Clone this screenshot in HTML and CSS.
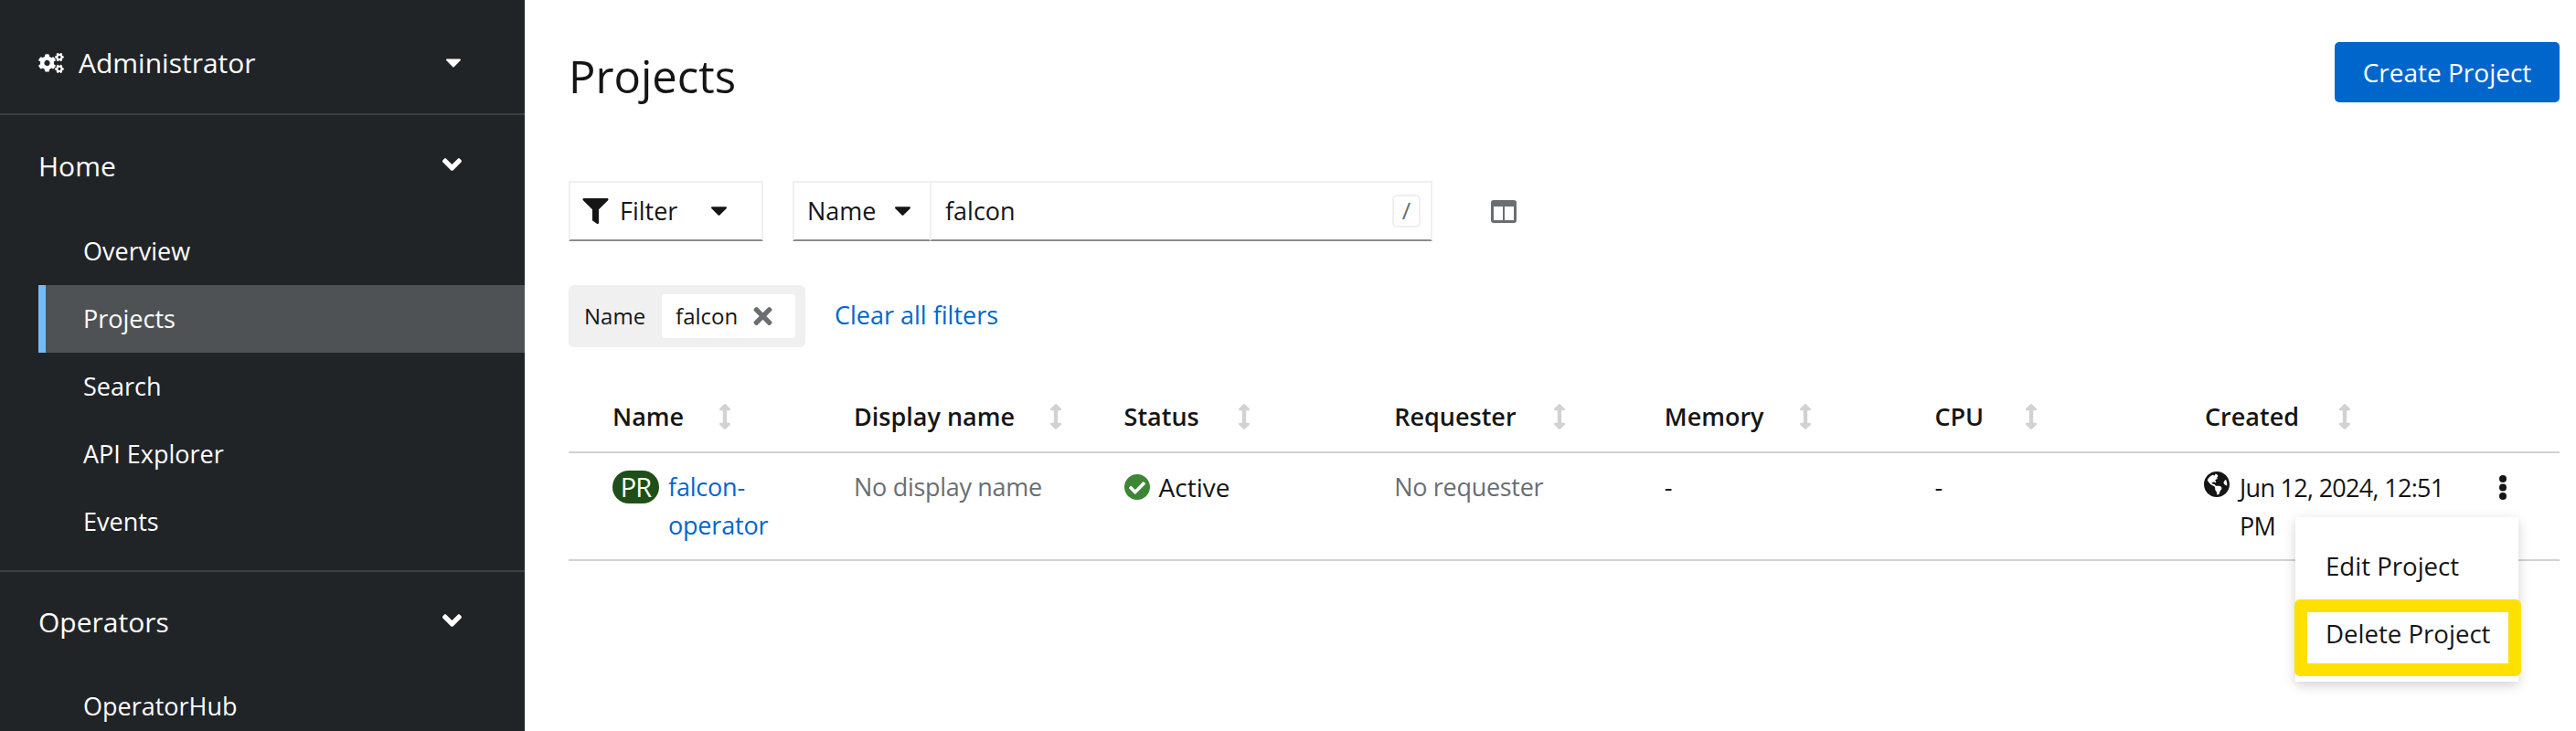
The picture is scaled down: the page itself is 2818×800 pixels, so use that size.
FILE: index.html
```html
<!DOCTYPE html>
<html lang="en">
<head>
    <meta charset="UTF-8">
    <title>Projects</title>
    <link rel="stylesheet" href="styles.css">
</head>
<body>
    <aside class="sidebar">
        <div class="perspective">
            <span class="perspective-name">
                <svg class="icon-cogs" viewBox="0 0 640 512"><path d="M512.1 191l-8.2 14.3c-3 5.3-9.4 7.5-15.1 5.4-11.8-4.4-22.6-10.7-32.1-18.6-4.6-3.8-5.8-10.5-2.8-15.7l8.2-14.3c-6.9-8-12.3-17.3-15.9-27.4h-16.5c-6 0-11.2-4.3-12.2-10.3-2-12-2.1-24.6 0-37.1 1-6 6.2-10.4 12.2-10.4h16.5c3.6-10.1 9-19.4 15.9-27.4l-8.2-14.3c-3-5.2-1.9-11.9 2.8-15.7 9.5-7.9 20.4-14.2 32.1-18.6 5.7-2.1 12.1.1 15.1 5.4l8.2 14.3c10.5-1.9 21.2-1.9 31.7 0L552 6.3c3-5.3 9.4-7.5 15.1-5.4 11.8 4.4 22.6 10.7 32.1 18.6 4.6 3.8 5.8 10.5 2.8 15.7l-8.2 14.3c6.9 8 12.3 17.3 15.9 27.4h16.5c6 0 11.2 4.3 12.2 10.3 2 12 2.1 24.6 0 37.1-1 6-6.2 10.4-12.2 10.4h-16.5c-3.6 10.1-9 19.4-15.9 27.4l8.2 14.3c3 5.2 1.9 11.9-2.8 15.7-9.5 7.9-20.4 14.2-32.1 18.6-5.7 2.1-12.1-.1-15.1-5.4l-8.2-14.3c-10.4 1.9-21.2 1.9-31.7 0zm-10.5-58.8c38.5 29.6 82.4-14.3 52.8-52.8-38.5-29.7-82.4 14.3-52.8 52.8zM386.3 286.1l33.7 16.8c10.1 5.8 14.5 18.1 10.5 29.1-8.9 24.2-26.4 46.4-42.6 65.8-7.4 8.9-20.2 11.1-30.3 5.3l-29.1-16.8c-16 13.7-34.6 24.6-54.9 31.7v33.6c0 11.6-8.3 21.6-19.7 23.6-24.6 4.2-50.4 4.4-75.9 0-11.5-2-20-11.9-20-23.6V418c-20.3-7.2-38.9-18-54.9-31.7L74 403c-10 5.8-22.9 3.6-30.3-5.3-16.2-19.4-33.3-41.6-42.2-65.7-4-10.9.4-23.2 10.5-29.1l33.3-16.8c-3.9-20.9-3.9-42.4 0-63.4L12 205.8c-10.1-5.8-14.6-18.1-10.5-29 8.9-24.2 26-46.4 42.2-65.8 7.4-8.9 20.2-11.1 30.3-5.3l29.1 16.8c16-13.7 34.6-24.6 54.9-31.7V57.1c0-11.5 8.2-21.5 19.6-23.5 24.6-4.2 50.5-4.4 76-.1 11.5 2 20 11.9 20 23.6v33.6c20.3 7.2 38.9 18 54.9 31.7l29.1-16.8c10-5.8 22.9-3.6 30.3 5.3 16.2 19.4 33.2 41.6 42.1 65.8 4 10.9.1 23.2-10 29.1l-33.7 16.8c3.9 21 3.9 42.5 0 63.5zm-117.6 21.1c59.2-77-28.7-164.9-105.7-105.7-59.2 77 28.7 164.9 105.7 105.7zm243.4 182.7l-8.2 14.3c-3 5.3-9.4 7.5-15.1 5.4-11.8-4.4-22.6-10.7-32.1-18.6-4.6-3.8-5.8-10.5-2.8-15.7l8.2-14.3c-6.9-8-12.3-17.3-15.9-27.4h-16.5c-6 0-11.2-4.3-12.2-10.3-2-12-2.1-24.6 0-37.1 1-6 6.2-10.4 12.2-10.4h16.5c3.6-10.1 9-19.4 15.9-27.4l-8.2-14.3c-3-5.2-1.9-11.9 2.8-15.7 9.5-7.9 20.4-14.2 32.1-18.6 5.7-2.1 12.1.1 15.1 5.4l8.2 14.3c10.5-1.9 21.2-1.9 31.7 0l8.2-14.3c3-5.3 9.4-7.5 15.1-5.4 11.8 4.4 22.6 10.7 32.1 18.6 4.6 3.8 5.8 10.5 2.8 15.7l-8.2 14.3c6.9 8 12.3 17.3 15.9 27.4h16.5c6 0 11.2 4.3 12.2 10.3 2 12 2.1 24.6 0 37.1-1 6-6.2 10.4-12.2 10.4h-16.5c-3.6 10.1-9 19.4-15.9 27.4l8.2 14.3c3 5.2 1.9 11.9-2.8 15.7-9.5 7.9-20.4 14.2-32.1 18.6-5.7 2.1-12.1-.1-15.1-5.4l-8.2-14.3c-10.4 1.9-21.2 1.9-31.7 0zM501.6 431c38.5 29.6 82.4-14.3 52.8-52.8-38.5-29.6-82.4 14.3-52.8 52.8z"/></svg>
                Administrator
            </span>
            <svg class="icon-caret" viewBox="10 188 300 175"><path d="M31.3 192h257.3c17.8 0 26.7 21.5 14.1 34.1L174.1 354.8c-7.8 7.8-20.5 7.8-28.3 0L17.2 226.1C4.6 213.5 13.5 192 31.3 192z"/></svg>
        </div>

        <div class="nav-section">
            <div class="nav-title">
                Home
                <svg class="icon-angle" viewBox="0 150 320 210"><path d="M143 352.3L7 216.3c-9.4-9.4-9.4-24.6 0-33.9l22.6-22.6c9.4-9.4 24.6-9.4 33.9 0l96.4 96.4 96.4-96.4c9.4-9.4 24.6-9.4 33.9 0l22.6 22.6c9.4 9.4 9.4 24.6 0 33.9l-136 136c-9.2 9.4-24.4 9.4-33.8 0z"/></svg>
            </div>
            <a class="nav-item" href="#">Overview</a>
            <a class="nav-item active" href="#">Projects</a>
            <a class="nav-item" href="#">Search</a>
            <a class="nav-item" href="#">API Explorer</a>
            <a class="nav-item" href="#">Events</a>
        </div>

        <div class="nav-section">
            <div class="nav-title">
                Operators
                <svg class="icon-angle" viewBox="0 150 320 210"><path d="M143 352.3L7 216.3c-9.4-9.4-9.4-24.6 0-33.9l22.6-22.6c9.4-9.4 24.6-9.4 33.9 0l96.4 96.4 96.4-96.4c9.4-9.4 24.6-9.4 33.9 0l22.6 22.6c9.4 9.4 9.4 24.6 0 33.9l-136 136c-9.2 9.4-24.4 9.4-33.8 0z"/></svg>
            </div>
            <a class="nav-item" href="#">OperatorHub</a>
        </div>
    </aside>

    <main class="main">
        <div class="page-header">
            <h1>Projects</h1>
            <button class="btn-primary" type="button">Create Project</button>
        </div>

        <div class="toolbar">
            <div class="select filter-select">
                <svg class="icon-filter" viewBox="0 0 512 512"><path d="M487.976 0H24.028C2.71 0-8.047 25.866 7.058 40.971L192 225.941V432c0 7.831 3.821 15.17 10.237 19.662l80 55.98C298.02 518.69 320 507.493 320 487.98V225.941l184.947-184.97C520.021 25.896 509.338 0 487.976 0z"/></svg>
                <span>Filter</span>
                <svg class="icon-caret dark" viewBox="10 188 300 175"><path d="M31.3 192h257.3c17.8 0 26.7 21.5 14.1 34.1L174.1 354.8c-7.8 7.8-20.5 7.8-28.3 0L17.2 226.1C4.6 213.5 13.5 192 31.3 192z"/></svg>
            </div>
            <div class="search-group">
                <div class="select name-select">
                    <span>Name</span>
                    <svg class="icon-caret dark" viewBox="10 188 300 175"><path d="M31.3 192h257.3c17.8 0 26.7 21.5 14.1 34.1L174.1 354.8c-7.8 7.8-20.5 7.8-28.3 0L17.2 226.1C4.6 213.5 13.5 192 31.3 192z"/></svg>
                </div>
                <div class="search-input">
                    <span>falcon</span>
                    <kbd class="shortcut">/</kbd>
                </div>
            </div>
            <svg class="icon-columns" viewBox="0 0 28 25">
                <rect width="28" height="25" rx="3" fill="#6a6e73"/>
                <rect x="3" y="7" width="10" height="15" fill="#fff"/>
                <rect x="15" y="7" width="10" height="15" fill="#fff"/>
            </svg>
        </div>

        <div class="chips-row">
            <div class="chip-group">
                <span class="chip-label">Name</span>
                <span class="chip">
                    falcon
                    <svg class="icon-times" viewBox="0 80 352 352"><path d="M242.72 256l100.07-100.07c12.28-12.28 12.28-32.19 0-44.48l-22.24-22.24c-12.28-12.28-32.19-12.28-44.48 0L176 189.28 75.93 89.21c-12.28-12.28-32.19-12.28-44.48 0L9.21 111.45c-12.28 12.28-12.28 32.19 0 44.48L109.28 256 9.21 356.07c-12.28 12.28-12.28 32.19 0 44.48l22.24 22.24c12.28 12.28 32.2 12.28 44.48 0L176 322.72l100.07 100.07c12.28 12.28 32.2 12.28 44.48 0l22.24-22.24c12.28-12.28 12.28-32.19 0-44.48L242.72 256z"/></svg>
                </span>
            </div>
            <a class="link" href="#">Clear all filters</a>
        </div>

        <div class="table">
            <div class="table-head">
                <div class="th name-th">Name <svg class="icon-sort" viewBox="0 0 256 512"><use href="#sort"/></svg></div>
                <div class="th display-th">Display name <svg class="icon-sort" viewBox="0 0 256 512"><use href="#sort"/></svg></div>
                <div class="th status-th">Status <svg class="icon-sort" viewBox="0 0 256 512"><use href="#sort"/></svg></div>
                <div class="th requester-th">Requester <svg class="icon-sort" viewBox="0 0 256 512"><use href="#sort"/></svg></div>
                <div class="th memory-th">Memory <svg class="icon-sort" viewBox="0 0 256 512"><use href="#sort"/></svg></div>
                <div class="th cpu-th">CPU <svg class="icon-sort" viewBox="0 0 256 512"><use href="#sort"/></svg></div>
                <div class="th created-th">Created <svg class="icon-sort" viewBox="0 0 256 512"><use href="#sort"/></svg></div>
            </div>
            <div class="table-row">
                <div class="td name-cell">
                    <span class="badge">PR</span>
                    <a class="link" href="#">falcon-<br>operator</a>
                </div>
                <div class="td muted">No display name</div>
                <div class="td status-cell">
                    <svg class="icon-check" viewBox="8 8 496 496"><path d="M504 256c0 136.967-111.033 248-248 248S8 392.967 8 256 119.033 8 256 8s248 111.033 248 248zM227.314 387.314l184-184c6.248-6.248 6.248-16.379 0-22.627l-22.627-22.627c-6.248-6.249-16.379-6.249-22.628 0L216 308.118l-70.059-70.059c-6.248-6.248-16.379-6.248-22.628 0l-22.627 22.627c-6.248 6.248-6.248 16.379 0 22.627l104 104c6.249 6.249 16.379 6.249 22.628.001z"/></svg>
                    Active
                </div>
                <div class="td muted">No requester</div>
                <div class="td">-</div>
                <div class="td">-</div>
                <div class="td created-cell">
                    <svg class="icon-globe" viewBox="0 8 496 496"><path d="M248 8C111.03 8 0 119.03 0 256s111.03 248 248 248 248-111.03 248-248S384.97 8 248 8zm82.29 357.6c-3.9 3.88-7.99 7.95-11.31 11.28-2.99 3-5.1 6.7-6.17 10.71-1.51 5.66-2.73 11.38-4.77 16.87l-17.39 46.85c-13.76 3-28 4.69-42.65 4.69v-27.38c1.69-12.62-7.64-36.26-22.63-51.25-6-6-9.37-14.14-9.37-22.63v-32.01c0-11.64-6.27-22.34-16.46-27.97-14.37-7.95-34.81-19.06-48.81-26.11-11.48-5.78-22.1-13.14-31.65-21.75l-.8-.72a114.792 114.792 0 0 1-18.06-20.74c-9.38-13.77-24.66-36.42-34.59-51.14 20.47-45.5 57.36-82.04 103.2-101.89l24.01 12.01C203.48 89.74 216 82.01 216 70.11v-11.3c7.99-1.29 16.12-2.11 24.39-2.42l28.3 28.3c6.25 6.25 6.25 16.38 0 22.63L264 112l-10.34 10.34c-3.12 3.12-3.12 8.19 0 11.31l4.69 4.69c3.12 3.12 3.12 8.19 0 11.31l-8 8a8.008 8.008 0 0 1-5.66 2.34h-8.99c-2.08 0-4.08.81-5.58 2.27l-9.92 9.65a8.008 8.008 0 0 0-1.58 9.31l15.59 31.19c2.66 5.32-1.21 11.58-7.15 11.58h-5.64c-1.93 0-3.79-.7-5.24-1.96l-9.28-8.06a16.017 16.017 0 0 0-15.55-3.1l-31.17 10.39a11.95 11.95 0 0 0-8.17 11.34c0 4.53 2.56 8.66 6.61 10.69l11.08 5.54c9.41 4.71 19.79 7.16 30.31 7.16s22.59 27.29 32 32h66.75c8.49 0 16.62 3.37 22.63 9.37l13.69 13.69a30.503 30.503 0 0 1 8.93 21.57 46.536 46.536 0 0 1-13.72 32.98zM417 274.25c-5.79-1.45-10.84-5-14.15-9.97l-17.98-26.97a23.97 23.97 0 0 1 0-26.62l19.59-29.38c2.32-3.47 5.5-6.29 9.24-8.15l12.98-6.49C440.2 193.59 448 223.87 448 256c0 8.67-.74 17.16-1.82 25.54L417 274.25z"/></svg>
                    <span class="created-text">Jun 12, 2024, 12:51<br>PM</span>
                </div>
                <div class="td kebab-cell">
                    <svg class="icon-kebab" viewBox="0 0 8 27">
                        <circle cx="4" cy="4" r="4"/>
                        <circle cx="4" cy="13.5" r="4"/>
                        <circle cx="4" cy="23" r="4"/>
                    </svg>
                    <div class="menu">
                        <a class="menu-item" href="#">Edit Project</a>
                        <a class="menu-item" href="#">Delete Project</a>
                        <div class="menu-highlight"></div>
                    </div>
                </div>
            </div>
        </div>
    </main>

    <svg class="svg-defs" width="0" height="0">
        <path id="sort" d="M214.059 377.941H168V134.059h46.059c21.382 0 32.09-25.851 16.971-40.971L144.971 7.029c-9.373-9.373-24.568-9.373-33.941 0L24.971 93.088c-15.119 15.119-4.411 40.971 16.971 40.971H88v243.882H41.941c-21.382 0-32.09 25.851-16.971 40.971l86.059 86.059c9.373 9.373 24.568 9.373 33.941 0l86.059-86.059c15.12-15.119 4.412-40.971-16.97-40.971z"/>
    </svg>
</body>
</html>
```

FILE: styles.css
```css
* {
    box-sizing: border-box;
}
html, body {
    height: 100%;
}
body {
    margin: 0;
    display: flex;
    overflow: hidden;
    background: #fff;
    color: #151515;
    font-family: "Open Sans", Arial, sans-serif;
    font-size: 27px;
    line-height: 42px;
}
a {
    text-decoration: none;
}
.svg-defs {
    position: absolute;
}

/* sidebar */
.sidebar {
    flex: 0 0 574px;
    height: 800px;
    overflow: hidden;
    background: #212427;
    color: #fff;
}
.perspective {
    height: 126px;
    display: flex;
    align-items: center;
    justify-content: space-between;
    padding: 14px 70px 0 42px;
    border-bottom: 2px solid #3c3f42;
    font-size: 30px;
}
.perspective-name {
    display: flex;
    align-items: center;
    gap: 16px;
}
.icon-cogs {
    width: 28px;
    height: 22px;
    fill: #fff;
}
.icon-caret {
    width: 16px;
    height: 10px;
    fill: #fff;
}
.icon-caret.dark {
    fill: #151515;
    width: 17px;
}
.icon-angle {
    width: 21px;
    height: 14px;
    fill: #fff;
    margin-top: -4px;
}
.nav-section {
    padding-bottom: 16px;
    border-bottom: 2px solid #3c3f42;
}
.nav-title {
    height: 112px;
    display: flex;
    align-items: center;
    justify-content: space-between;
    padding: 0 69px 0 42px;
    font-size: 30px;
}
.nav-section + .nav-section .nav-title {
    height: 110px;
}
.nav-item {
    display: flex;
    align-items: center;
    height: 74px;
    margin-left: 42px;
    padding-left: 41px;
    border-left: 8px solid transparent;
    color: #fff;
}
.nav-item.active {
    background: #4f5255;
    border-left-color: #73bcf7;
}

/* main */
.main {
    flex: 1;
    padding: 46px 18px 0 48px;
}
.page-header {
    display: flex;
    justify-content: space-between;
    align-items: flex-start;
}
h1 {
    margin: 12px 0 0;
    font-size: 49px;
    line-height: 50px;
    font-weight: 500;
}
.btn-primary {
    width: 246px;
    height: 66px;
    border: none;
    border-radius: 5px;
    background: #06c;
    color: #fff;
    font: inherit;
    font-size: 28px;
}

/* toolbar */
.toolbar {
    display: flex;
    align-items: center;
    margin-top: 86px;
}
.select, .search-input {
    height: 66px;
    display: flex;
    align-items: center;
    border: 2px solid #f0f0f0;
    border-bottom: 2px solid #8a8d90;
}
.filter-select {
    width: 213px;
    padding-left: 13px;
}
.filter-select span {
    margin-left: 12px;
}
.filter-select .icon-caret {
    margin-left: 37px;
}
.icon-filter {
    width: 29px;
    height: 28px;
    fill: #151515;
}
.search-group {
    display: flex;
    margin-left: 32px;
    width: 700px;
}
.name-select {
    width: 150px;
    padding-left: 14px;
    border-right: none;
}
.name-select .icon-caret {
    margin-left: 20px;
}
.search-input {
    flex: 1;
    justify-content: space-between;
    padding: 0 11px 0 15px;
}
.shortcut {
    width: 31px;
    height: 36px;
    border: 2px solid #f0f0f0;
    border-radius: 5px;
    text-align: center;
    font: inherit;
    font-size: 26px;
    line-height: 30px;
    color: #6a6e73;
}
.icon-columns {
    width: 28px;
    height: 25px;
    margin-left: 64px;
}

/* filter chips */
.chips-row {
    display: flex;
    align-items: center;
    gap: 32px;
    margin-top: 48px;
}
.chip-group {
    width: 259px;
    height: 68px;
    display: flex;
    align-items: center;
    padding-left: 17px;
    border-radius: 6px;
    background: #f0f0f0;
    font-size: 24px;
}
.chip {
    width: 146px;
    height: 48px;
    margin-left: 18px;
    display: flex;
    align-items: center;
    justify-content: space-between;
    padding: 0 25px 0 15px;
    border-radius: 4px;
    background: #fff;
}
.icon-times {
    width: 21px;
    height: 20px;
    fill: #6a6e73;
}
.link {
    color: #06c;
}
.chips-row .link {
    margin-top: -2px;
}

/* table */
.table {
    margin-top: 40px;
}
.table-head, .table-row {
    display: grid;
    grid-template-columns: 264px repeat(5, 295.6px) 292px 68px;
    padding-left: 48px;
    border-bottom: 2px solid #d2d2d2;
}
.table-head {
    height: 76px;
    align-items: center;
    padding-bottom: 2px;
    font-weight: 600;
}
.th {
    display: flex;
    align-items: center;
}
.icon-sort {
    width: 14px;
    height: 28px;
    fill: #d2d2d2;
}
.name-th .icon-sort { margin-left: 38px; }
.display-th .icon-sort { margin-left: 38px; }
.status-th .icon-sort { margin-left: 42px; }
.requester-th .icon-sort { margin-left: 40px; }
.memory-th .icon-sort { margin-left: 38px; }
.cpu-th .icon-sort { margin-left: 45px; }
.created-th .icon-sort { margin-left: 43px; }
.table-row {
    height: 118px;
    padding-top: 16px;
}
.muted {
    color: #6a6e73;
    letter-spacing: -0.3px;
}
.name-cell {
    display: flex;
    align-items: flex-start;
    gap: 10px;
}
.name-cell .link {
    letter-spacing: -0.2px;
}
.badge {
    width: 51px;
    height: 36px;
    margin-top: 3px;
    border-radius: 18px;
    background: #1e4f18;
    color: #fff;
    text-align: center;
    font-size: 29px;
    letter-spacing: -1px;
    line-height: 36px;
}
.status-cell {
    display: flex;
    align-items: flex-start;
    gap: 10px;
    font-size: 28px;
}
.icon-check {
    width: 28px;
    height: 28px;
    margin-top: 7px;
    fill: #3e8635;
}
.created-cell {
    display: flex;
    align-items: flex-start;
    gap: 11px;
    margin-left: -1px;
}
.created-text {
    letter-spacing: -0.7px;
    margin-top: 1px;
}
.icon-globe {
    width: 28px;
    height: 28px;
    margin-top: 4px;
    flex: none;
    fill: #151515;
}
.kebab-cell {
    position: relative;
    display: flex;
    justify-content: center;
}
.icon-kebab {
    width: 8px;
    height: 27px;
    margin-top: 8px;
    fill: #151515;
}

/* dropdown */
.menu {
    position: absolute;
    top: 54px;
    right: 17px;
    width: 244px;
    padding: 16px 0;
    background: #fff;
    box-shadow: 0 4px 12px rgba(3, 3, 3, 0.18);
    font-size: 27.6px;
    z-index: 2;
}
.menu-item {
    display: flex;
    align-items: center;
    height: 74px;
    padding-left: 33px;
    color: #151515;
}
.menu-highlight {
    position: absolute;
    top: 90px;
    left: -1px;
    width: 248px;
    height: 84px;
    border: 14px solid #ffe000;
    border-radius: 6px;
}
```
